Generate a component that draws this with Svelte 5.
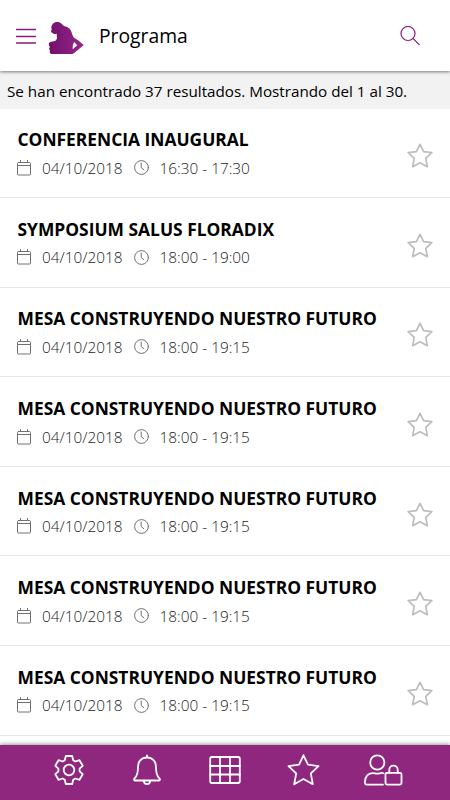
<script lang="ts">
  interface Session {
    id: number;
    title: string;
    date: string;
    time: string;
  }

  const total = 37;
  const pageSize = 30;

  const sessions: Session[] = [
    { id: 1, title: 'CONFERENCIA INAUGURAL', date: '04/10/2018', time: '16:30 - 17:30' },
    { id: 2, title: 'SYMPOSIUM SALUS FLORADIX', date: '04/10/2018', time: '18:00 - 19:00' },
    { id: 3, title: 'MESA CONSTRUYENDO NUESTRO FUTURO', date: '04/10/2018', time: '18:00 - 19:15' },
    { id: 4, title: 'MESA CONSTRUYENDO NUESTRO FUTURO', date: '04/10/2018', time: '18:00 - 19:15' },
    { id: 5, title: 'MESA CONSTRUYENDO NUESTRO FUTURO', date: '04/10/2018', time: '18:00 - 19:15' },
    { id: 6, title: 'MESA CONSTRUYENDO NUESTRO FUTURO', date: '04/10/2018', time: '18:00 - 19:15' },
    { id: 7, title: 'MESA CONSTRUYENDO NUESTRO FUTURO', date: '04/10/2018', time: '18:00 - 19:15' }
  ];

  let favorites = $state<number[]>([]);

  function toggleFavorite(id: number) {
    favorites = favorites.includes(id) ? favorites.filter((f) => f !== id) : [...favorites, id];
  }
</script>

<div class="app">
  <header class="topbar">
    <button type="button" class="icon-btn menu" aria-label="Menú">
      <svg width="20" height="16" viewBox="0 0 20 16">
        <path d="M.5 1.500h19M.5 8.500h19M.5 15h19" />
      </svg>
    </button>
    <svg class="logo" width="36" height="34" viewBox="0 0 36 34">
      <defs>
        <linearGradient id="logo-fill">
          <stop offset="0" stop-color="#73106b" />
          <stop offset="1" stop-color="#94278a" />
        </linearGradient>
      </defs>
      <path
        fill="url(#logo-fill)"
        fill-rule="evenodd"
        d="M5.500 2.200C7.500.5 12 .6 13.500 2.700L16 5C18 5.800 20.500 6 22 8.200C23.800 10.500 23.700 12.500 25 15.200C26 17 28 18 30 19.200L35.800 24L26.500 31.700L24.500 33H3.300C1.800 32.500 1.400 31 2 29.700C.8 28.500 1 26.800 2 25.700C.4 24.500.5 22.500 1.500 21.500C3.500 20.200 6 20.500 7.500 19.700C8.700 18.500 9.200 17.500 9 16C8.500 14.500 8.700 13.700 9 12.700C7.500 13.500 5.500 13 4 11.700C2.700 10.700 2.800 9.500 3.800 8.500C2.800 6.500 3.500 3.800 5.500 2.200ZM26.200 21C24.900 23 24.400 25.500 24.800 28.300L29.200 24.300C28.300 22.900 27.300 21.800 26.200 21Z"
      />
    </svg>
    <h1>Programa</h1>
    <button type="button" class="icon-btn search" aria-label="Buscar">
      <svg width="20" height="20" viewBox="0 0 20 20">
        <circle cx="8" cy="7.500" r="7" />
        <path d="M13.200 12.700l6 6" />
      </svg>
    </button>
  </header>

  <p class="results">Se han encontrado {total} resultados. Mostrando del 1 al {pageSize}.</p>

  <ul class="sessions">
    {#each sessions as session (session.id)}
      <li class="session">
        <div class="info">
          <h2>{session.title}</h2>
          <div class="meta">
            <svg class="calendar" width="14" height="16" viewBox="0 0 14 16">
              <rect x=".5" y="2.500" width="13" height="12.500" rx="1" />
              <path d="M.5 5.500h13M3.500.5v2M10.500.5v2" />
            </svg>
            <span class="date">{session.date}</span>
            <svg class="clock" width="15" height="15" viewBox="0 0 15 15">
              <circle cx="7.500" cy="7.500" r="6.900" />
              <path d="M7.200 3v4.500l2.600 2.200" />
            </svg>
            <span>{session.time}</span>
          </div>
        </div>
        <button
          type="button"
          class="icon-btn favorite"
          class:active={favorites.includes(session.id)}
          aria-label="Favorito"
          onclick={() => toggleFavorite(session.id)}
        >
          <svg width="26" height="26" viewBox="0 0 26 26">
            <path d="M13 1.300l3.600 7.300 8.200 1.100-6 5.700 1.500 8.300-7.300-3.900-7.300 3.900 1.500-8.300-6-5.700 8.200-1.100z" />
          </svg>
        </button>
      </li>
    {/each}
  </ul>

  <nav class="tabbar">
    <button type="button" class="icon-btn" aria-label="Ajustes">
      <svg width="32" height="32" viewBox="-16 -16 32 32">
        <path
          d="M-4.200-9.800L-3.200-14H3.200L4.200-9.800L6.400-8.500L10.500-9.800L13.700-4.200L10.600-1.300V1.300L13.700 4.200L10.500 9.800L6.400 8.500L4.200 9.800L3.200 14H-3.200L-4.200 9.800L-6.400 8.500L-10.500 9.800L-13.700 4.200L-10.600 1.300V-1.300L-13.700-4.200L-10.500-9.800L-6.400-8.500Z"
        />
        <circle r="5.300" />
      </svg>
    </button>
    <button type="button" class="icon-btn" aria-label="Avisos">
      <svg width="32" height="32" viewBox="0 0 32 32">
        <path d="M16 1.500v2M16 3.500c-5.500 0-9 4-9 9.500 0 7.500-1.200 9.500-3.500 11.500-.8.800-.3 2 .8 2h23.400c1.100 0 1.600-1.200.8-2-2.300-2-3.500-4-3.500-11.500 0-5.500-3.500-9.500-9-9.500zM12.800 27c.3 4.300 6.100 4.300 6.400 0" />
      </svg>
    </button>
    <button type="button" class="icon-btn" aria-label="Agenda">
      <svg width="32" height="32" viewBox="0 0 32 32">
        <rect x="1.200" y="3" width="29.600" height="26" rx="1.800" />
        <path d="M1.200 12h29.600M1.200 20.500h29.600M11 3v26M21 3v26" />
      </svg>
    </button>
    <button type="button" class="icon-btn star" aria-label="Favoritos">
      <svg width="32" height="32" viewBox="-1.500 0 32 32">
        <path d="M16 1.300l4.500 9.400 10.500 1.400-7.700 7.300 2 10.800-9.300-5.200-9.300 5.200 2-10.800L1 12.100l10.500-1.400z" />
      </svg>
    </button>
    <button type="button" class="icon-btn" aria-label="Área privada">
      <svg width="40" height="32" viewBox="1 0 40 32">
        <circle cx="14.300" cy="8.500" r="7.100" />
        <path d="M20.500 19.300c-1.500-.7-2.500-.4-4 0-1.500.4-3 .4-4.500 0-6-1.300-10 2.600-10 8.500v1c0 1.100.7 1.800 1.800 1.800h16.200" />
        <rect x="22.500" y="18.800" width="16" height="11.800" rx="1.500" />
        <path d="M26.300 18.800v-3c0-5.600 8.400-5.600 8.400 0v3" />
      </svg>
    </button>
  </nav>
</div>

<style>
  :global(body) {
    margin: 0;
    background: #fff;
  }

  .app {
    display: flex;
    flex-direction: column;
    height: 800px;
    overflow: hidden;
    font-family: 'Open Sans', 'Noto Sans', sans-serif;
    color: #000;
  }

  svg {
    display: block;
    flex: none;
    fill: none;
    stroke-linecap: round;
    stroke-linejoin: round;
  }

  .icon-btn {
    display: block;
    padding: 0;
    border: none;
    background: none;
    cursor: pointer;
  }

  .topbar {
    position: relative;
    z-index: 1;
    display: flex;
    flex: none;
    align-items: center;
    box-sizing: border-box;
    height: 71px;
    padding: 0 30px 0 16px;
    background: #fff;
    box-shadow: 0 1px 3px rgba(0, 0, 0, 0.5);
  }

  .menu svg,
  .search svg {
    stroke: #8a1a80;
    stroke-width: 1.4;
  }

  .search svg {
    stroke-width: 1.2;
  }

  .logo {
    margin: 4px 0 0 12px;
  }

  h1 {
    flex: 1;
    margin: 0 0 0 15px;
    font-size: 19.300px;
    font-weight: 400;
    line-height: 28px;
  }

  .results {
    flex: none;
    box-sizing: border-box;
    height: 37.500px;
    margin: 0;
    padding: 0 7px;
    background: #f2f2f2;
    font-size: 15.230px;
    line-height: 41px;
    white-space: nowrap;
  }

  .sessions {
    flex: 1;
    min-height: 0;
    margin: 0;
    padding: 0;
    overflow: hidden;
    list-style: none;
  }

  .session {
    display: flex;
    align-items: center;
    justify-content: space-between;
    box-sizing: border-box;
    height: 89.600px;
    padding: 2px 17px 0;
    border-bottom: 1px solid #e6e6e6;
  }

  h2 {
    margin: 0 0 0 0.5px;
    font-size: 17.400px;
    font-weight: 700;
    line-height: 28px;
  }

  .meta {
    display: flex;
    align-items: center;
    height: 29px;
    color: #1a1a1a;
    font-size: 15.350px;
    font-weight: 300;
  }

  .meta svg {
    stroke: #707070;
    stroke-width: 1;
  }

  .date {
    margin: 0 11px;
  }

  .clock {
    margin-right: 11px;
  }

  .favorite {
    margin-top: 5px;
  }

  .favorite svg {
    stroke: #bdbdbd;
    stroke-width: 1.700;
  }

  .favorite.active svg {
    fill: #bdbdbd;
  }

  .tabbar {
    position: relative;
    display: flex;
    flex: none;
    align-items: center;
    justify-content: space-between;
    box-sizing: border-box;
    height: 55px;
    padding: 0 46px 5px 53px;
    background: #90277f;
    box-shadow: 0 -1px 4px rgba(0, 0, 0, 0.4);
  }

  .tabbar svg {
    stroke: #fff;
    stroke-width: 1.800;
  }

  .star svg {
    overflow: visible;
  }
</style>
